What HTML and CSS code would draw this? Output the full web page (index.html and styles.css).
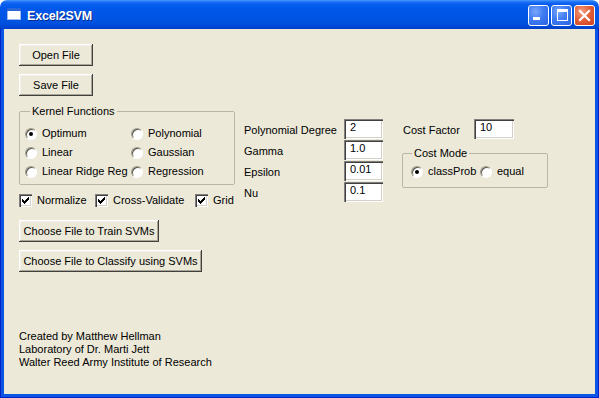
FILE: index.html
```html
<!DOCTYPE html>
<html>
<head>
<meta charset="utf-8">
<title>Excel2SVM</title>
<link rel="stylesheet" href="styles.css">
</head>
<body>
<div class="window">
  <div class="titlebar">
    <svg class="app-icon" width="14" height="12" viewBox="0 0 14 12">
      <rect x="0.5" y="0.5" width="13" height="11" fill="#ffffff" stroke="#9fb9ef"/>
      <rect x="0" y="0" width="14" height="3" fill="#2a66d8"/>
    </svg>
    <span class="title">Excel2SVM</span>
    <div class="controls">
      <div class="tb-btn tb-min"><span class="min-bar"></span></div>
      <div class="tb-btn tb-max"><span class="max-box"></span></div>
      <div class="tb-btn tb-close">
        <svg width="13" height="13" viewBox="0 0 13 13"><path d="M2 2 L11 11 M11 2 L2 11" stroke="#fff" stroke-width="2.2" stroke-linecap="square"/></svg>
      </div>
    </div>
  </div>
  <div class="frame">
    <div class="client">
      <div class="main">
        <div class="col-left">
          <button class="btn btn-small">Open File</button>
          <button class="btn btn-small gap8">Save File</button>
          <fieldset class="group kernel">
            <legend class="legend-kernel">Kernel Functions</legend>
            <div class="radios">
              <label class="opt"><span class="radio checked"></span>Optimum</label>
              <label class="opt"><span class="radio"></span>Polynomial</label>
              <label class="opt"><span class="radio"></span>Linear</label>
              <label class="opt"><span class="radio"></span>Gaussian</label>
              <label class="opt"><span class="radio"></span>Linear Ridge Reg</label>
              <label class="opt"><span class="radio"></span>Regression</label>
            </div>
          </fieldset>
          <div class="checks">
            <label class="chk"><span class="box"><svg width="13" height="13" viewBox="0 0 13 13"><path d="M3 5 V8 H4 V9 H5 V10 H6 V9 H7 V8 H8 V7 H9 V6 H10 V3 H9 V4 H8 V5 H7 V6 H6 V7 H5 V6 H4 V5 Z" fill="#000"/></svg></span>Normalize</label>
            <label class="chk"><span class="box"><svg width="13" height="13" viewBox="0 0 13 13"><path d="M3 5 V8 H4 V9 H5 V10 H6 V9 H7 V8 H8 V7 H9 V6 H10 V3 H9 V4 H8 V5 H7 V6 H6 V7 H5 V6 H4 V5 Z" fill="#000"/></svg></span>Cross-Validate</label>
            <label class="chk"><span class="box"><svg width="13" height="13" viewBox="0 0 13 13"><path d="M3 5 V8 H4 V9 H5 V10 H6 V9 H7 V8 H8 V7 H9 V6 H10 V3 H9 V4 H8 V5 H7 V6 H6 V7 H5 V6 H4 V5 Z" fill="#000"/></svg></span>Grid</label>
          </div>
          <button class="btn btn-train">Choose File to Train SVMs</button>
          <button class="btn btn-classify gap8">Choose File to Classify using SVMs</button>
        </div>
        <div class="col-mid">
          <span class="lbl">Polynomial Degree</span><span class="field">2</span>
          <span class="lbl">Gamma</span><span class="field">1.0</span>
          <span class="lbl">Epsilon</span><span class="field">0.01</span>
          <span class="lbl">Nu</span><span class="field">0.1</span>
        </div>
        <div class="col-right">
          <div class="cost-row">
            <span class="lbl cost-lbl">Cost Factor</span><span class="field field-wide">10</span>
          </div>
          <fieldset class="group costmode">
            <legend class="legend-cost">Cost Mode</legend>
            <div class="cost-opts">
              <label class="opt opt-class"><span class="radio checked"></span>classProb</label>
              <label class="opt"><span class="radio"></span>equal</label>
            </div>
          </fieldset>
        </div>
      </div>
      <div class="footer">
        <div>Created by Matthew Hellman</div>
        <div>Laboratory of Dr. Marti Jett</div>
        <div>Walter Reed Army Institute of Research</div>
      </div>
    </div>
  </div>
</div>
</body>
</html>
```
FILE: styles.css
```css
* { box-sizing: border-box; }
html, body { margin: 0; padding: 0; }
body {
  width: 599px;
  height: 398px;
  overflow: hidden;
  background: #ffffff;
  font-family: "Liberation Sans", Arial, sans-serif;
  font-size: 11px;
  line-height: 13px;
  color: #000;
}
.window {
  width: 599px;
  height: 398px;
  display: flex;
  flex-direction: column;
}
.titlebar {
  height: 29px;
  flex: none;
  display: flex;
  align-items: center;
  padding: 0 4px 0 7px;
  border-radius: 7px 7px 0 0;
  background: linear-gradient(to bottom, #4a9bff 0px, #1a6ef5 2px, #0a5eee 4px, #0058ea 8px, #0055e5 16px, #0053e1 22px, #004ad8 26px, #003fc6 29px);
}
.app-icon { margin-bottom: 2px; flex: none; }
.title {
  margin-left: 6px;
  margin-top: 4px;
  color: #fff;
  font-weight: bold;
  font-size: 12.5px;
  letter-spacing: -0.2px;
  text-shadow: 1px 1px 0 #0a2b8c;
}
.controls {
  margin-left: auto;
  margin-top: 2px;
  display: flex;
  gap: 2px;
}
.tb-btn {
  width: 21px;
  height: 21px;
  border: 1px solid #fff;
  border-radius: 3px;
  background: radial-gradient(circle at 35% 30%, #7aa7fb 0%, #3f7cf3 45%, #2a61e0 100%);
}
.tb-min {
  display: flex;
  align-items: flex-end;
  padding: 0 0 5px 4px;
}
.min-bar { width: 7px; height: 3px; background: #fff; }
.tb-max {
  display: flex;
  padding: 3px 0 0 5px;
}
.max-box {
  width: 11px;
  height: 12px;
  border: 1px solid #fff;
  border-top-width: 3px;
}
.tb-close {
  display: flex;
  align-items: center;
  justify-content: center;
  background: radial-gradient(circle at 35% 30%, #f3a285 0%, #e3603a 45%, #c9401d 100%);
}
.frame {
  flex: 1;
  display: flex;
  border: 1px solid #0022c8;
  border-top: none;
  padding: 0 3px 3px 3px;
  background: #0a55e4;
}
.client {
  flex: 1;
  background: #ece9d8;
  display: flex;
  flex-direction: column;
  padding: 15px 0 0 15px;
}
.main {
  display: flex;
  align-items: flex-start;
}
.col-left {
  width: 216px;
  display: flex;
  flex-direction: column;
  align-items: flex-start;
}
.btn {
  height: 22px;
  padding: 0;
  margin: 0;
  border: none;
  font-family: inherit;
  font-size: 11px;
  color: #000;
  text-align: center;
  background: #ece9d8;
  box-shadow: inset -1px -1px #404040, inset 1px 1px #ffffff, inset -2px -2px #a9a694, inset 2px 2px #f4f2e8;
}
.btn-small { width: 74px; }
.btn-train { width: 140px; margin-top: 13px; }
.btn-classify { width: 183px; }
.gap8 { margin-top: 8px; }
.group {
  margin: 0;
  border: 1px solid #b9b6a6;
  border-radius: 2px;
  min-width: 0;
}
.group legend {
  padding: 0 2px;
  line-height: 13px;
}
.kernel {
  width: 216px;
  margin-top: 9px;
  padding: 6px 0 3px 5px;
}
.legend-kernel { margin-left: 5px; }
.radios {
  display: grid;
  grid-template-columns: 106px auto;
  grid-auto-rows: 19px;
}
.opt {
  display: flex;
  align-items: center;
  gap: 5px;
  white-space: nowrap;
}
.radio {
  flex: none;
  width: 12px;
  height: 12px;
  border-radius: 50%;
  background: #fff;
  border: 1px solid;
  border-color: #9d9a8a #ffffff #ffffff #9d9a8a;
  box-shadow: inset 1px 1px 0 #5a5850;
  display: flex;
  align-items: center;
  justify-content: center;
}
.radio.checked::after {
  content: "";
  width: 4px;
  height: 4px;
  border-radius: 50%;
  background: #000;
}
.checks {
  margin-top: 9px;
  display: grid;
  grid-template-columns: 76px 100px auto;
  height: 13px;
}
.chk {
  display: flex;
  align-items: center;
  gap: 5px;
  white-space: nowrap;
}
.box {
  flex: none;
  width: 13px;
  height: 13px;
  background: #fff;
  box-shadow: inset 1px 1px #808080, inset 2px 2px #404040, inset -1px -1px #ffffff, inset -2px -2px #d4d0c8;
  display: block;
}
.box svg { display: block; }
.col-mid {
  margin-left: 9px;
  margin-top: 75px;
  display: grid;
  grid-template-columns: 100px 39px;
  grid-auto-rows: 20px;
  row-gap: 1px;
}
.lbl {
  padding-top: 5px;
  white-space: nowrap;
}
.field {
  display: block;
  width: 39px;
  height: 20px;
  background: #fff;
  padding: 2px 0 0 6px;
  box-shadow: inset 1px 1px #808080, inset 2px 2px #404040, inset -1px -1px #ffffff, inset -2px -2px #d4d0c8;
}
.field-wide { width: 40px; }
.col-right {
  margin-left: 19px;
  margin-top: 75px;
  display: flex;
  flex-direction: column;
}
.cost-row {
  display: flex;
  height: 20px;
}
.cost-lbl {
  width: 72px;
  padding-left: 1px;
}
.costmode {
  width: 146px;
  margin-top: 8px;
  padding: 5px 0 9px 8px;
}
.legend-cost { margin-left: 1px; }
.cost-opts {
  display: flex;
  height: 13px;
}
.opt-class { width: 69px; }
.footer {
  margin-top: auto;
  padding-bottom: 25px;
}
```
